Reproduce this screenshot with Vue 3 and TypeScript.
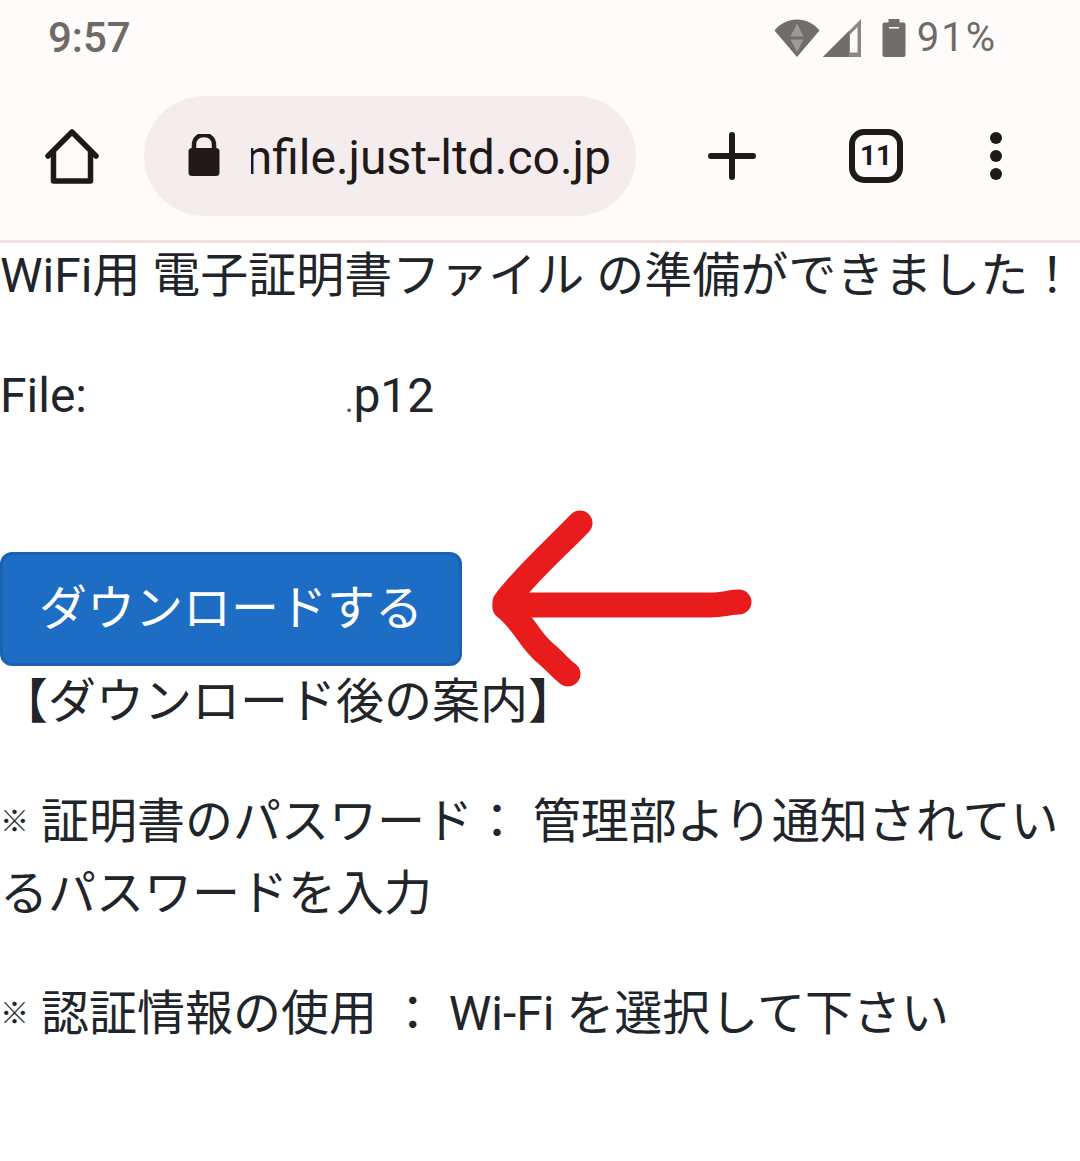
<script setup lang="ts">
const url = 'nfile.just-ltd.co.jp'
</script>

<template>
  <div class="screen">
    <header class="chrome">
      <div class="status">
        <span class="time">9:57</span>
        <div class="status-right">
          <svg class="wifi" width="46" height="38" viewBox="0 0 46 38">
            <path d="M0.500 11.500C6 4.500 14 0.500 23 0.500S40 4.500 45.500 11.500L23 38Z" fill="#716d6c" />
            <path d="M23 4.500L29.500 17.500H16.500Z M16.500 20.500H29.500L23 33Z" fill="#9c9a99" />
          </svg>
          <svg class="signal" width="38" height="38" viewBox="0 0 38 38">
            <path d="M38 0V38H0Z" fill="#8a8786" />
            <path d="M26 12L0 38H26Z" fill="#716d6c" />
            <path d="M27 33.500H34.500V8L27 15.500Z" fill="#fffbfa" />
          </svg>
          <svg class="battery" width="24" height="38" viewBox="0 0 24 38">
            <path d="M6.500 0H17.500V3.500H21.500Q23.500 3.500 23.500 5.500V36Q23.500 38 21.500 38H2.500Q0.500 38 0.500 36V5.500Q0.500 3.500 2.500 3.500H6.500Z" fill="#716d6c" />
            <rect x="7" y="8" width="10" height="1.500" fill="#fffbfa" />
          </svg>
          <span class="level">91%</span>
        </div>
      </div>
      <div class="toolbar">
        <button class="tool home" aria-label="ホーム">
          <svg width="56" height="60" viewBox="0 0 56 60" fill="none" stroke="#1f1a19" stroke-width="5.500" stroke-linecap="round" stroke-linejoin="round">
            <path d="M4 30L28 6L52 30" />
            <path d="M9.500 27V55H46.500V27" />
          </svg>
        </button>
        <div class="omnibox">
          <svg class="lock" width="32" height="42" viewBox="0 0 32 42">
            <path d="M6 16V11C6 5 10 1 16 1S26 5 26 11V16" fill="none" stroke="#1f1a19" stroke-width="4.500" />
            <rect x="0.500" y="14" width="31" height="28" rx="3.500" fill="#1f1a19" />
          </svg>
          <div class="url"><span>{{ url }}</span></div>
        </div>
        <button class="tool plus" aria-label="新しいタブ">
          <svg width="48" height="48" viewBox="0 0 48 48" stroke="#1f1a19" stroke-width="6" stroke-linecap="round">
            <path d="M3 24H45M24 3V45" />
          </svg>
        </button>
        <button class="tool tabs" aria-label="タブ"><span>11</span></button>
        <button class="tool menu" aria-label="メニュー">
          <i></i><i></i><i></i>
        </button>
      </div>
    </header>

    <main class="content">
      <p class="lead">WiFi用 電子証明書ファイル の準備ができました！</p>
      <p class="file">File:<span class="masked"></span><span class="dot">.</span>p12</p>
      <div class="action">
        <button class="download">ダウンロードする</button>
        <svg class="arrow" width="290" height="200" viewBox="0 0 290 200" fill="none" stroke="#e91c1d" stroke-width="25" stroke-linecap="round" stroke-linejoin="round">
          <path d="M92 23C70 46 40 72 17 102" />
          <path d="M17 105H222C235 105 243 102 251 102" />
          <path d="M17 107C36 122 40 138 56 152C66 160 72 168 80 174" />
        </svg>
      </div>
      <p class="guide">【ダウンロード後の案内】</p>
      <p class="note"><span class="mark">※</span> 証明書のパスワード： 管理部より通知されているパスワードを入力</p>
      <p class="note"><span class="mark">※</span> 認証情報の使用 ： Wi-Fi を選択して下さい</p>
    </main>
  </div>
</template>

<style scoped>
.screen {
  width: 1080px;
  height: 1161px;
  overflow: hidden;
  background: #fff;
  color: #212529;
  font-family: Roboto, "Noto Sans CJK JP", sans-serif;
  font-size: 48px;
  line-height: 72px;
}

.chrome {
  height: 240px;
  background: #fffbfa;
  box-shadow: 0 3px 0 #f3dfdd;
  position: relative;
}

.status {
  height: 76px;
  padding: 0 83px 0 48px;
  display: flex;
  align-items: center;
  justify-content: space-between;
  color: #6e6a69;
}

.time {
  font-size: 42px;
  line-height: 76px;
  font-weight: 500;
}

.status-right {
  display: flex;
  align-items: center;
}

.status-right svg {
  display: block;
}

.signal {
  margin-left: 3px;
}

.battery {
  margin: 0 11px 0 21px;
}

.level {
  font-size: 40px;
  line-height: 76px;
  letter-spacing: 2px;
}

.toolbar {
  height: 160px;
  padding-top: 20px;
  display: flex;
  align-items: flex-start;
}

.tool {
  border: 0;
  padding: 0;
  background: none;
  display: flex;
  align-items: center;
  justify-content: center;
  height: 120px;
}

.tool svg {
  display: block;
}

.home {
  width: 144px;
}

.omnibox {
  width: 492px;
  height: 120px;
  padding: 0 25px 0 44px;
  box-sizing: border-box;
  border-radius: 60px;
  background: #f5eded;
  display: flex;
  align-items: center;
}

.lock {
  flex: none;
  margin-top: -2px;
}

.url {
  flex: 1;
  min-width: 0;
  margin: 4px 0 0 31px;
  overflow: hidden;
  display: flex;
  justify-content: flex-end;
  white-space: nowrap;
  color: #1f1a19;
  font-size: 48px;
  line-height: 60px;
}

.url span {
  flex: none;
}

.plus {
  width: 48px;
  margin-left: 72px;
}

.tabs {
  width: 54px;
  height: 54px;
  margin: 33px 0 0 93px;
  box-sizing: border-box;
  border: 6px solid #1f1a19;
  border-radius: 15px;
  color: #1f1a19;
  font-family: Roboto, sans-serif;
  font-size: 28px;
  font-weight: 700;
  line-height: 1;
}

.menu {
  width: 12px;
  margin-left: 87px;
  flex-direction: column;
  gap: 6px;
}

.menu i {
  display: block;
  width: 12px;
  height: 12px;
  border-radius: 50%;
  background: #1f1a19;
}

.content {
  display: flow-root;
}

.content p {
  margin: 0;
}

.content .file {
  margin-top: 48px;
}

.masked {
  display: inline-block;
  width: 258px;
}

.dot {
  font-size: 32px;
  line-height: 0;
  color: #555;
}

.action {
  position: relative;
  margin-top: 120px;
  height: 114px;
}

.download {
  display: block;
  box-sizing: border-box;
  width: 462px;
  height: 114px;
  padding: 18px 36px;
  border: 3px solid #1a62b2;
  border-radius: 12px;
  background: #1c6dc3;
  color: #fff;
  font: inherit;
  white-space: nowrap;
}

.arrow {
  position: absolute;
  left: 488px;
  top: -52px;
}

.content .note {
  margin-top: 48px;
}

.mark {
  font-size: 29px;
  font-weight: 700;
  line-height: 0;
  vertical-align: 6px;
}
</style>

<style>
html,
body {
  margin: 0;
  background: #fff;
}
</style>
